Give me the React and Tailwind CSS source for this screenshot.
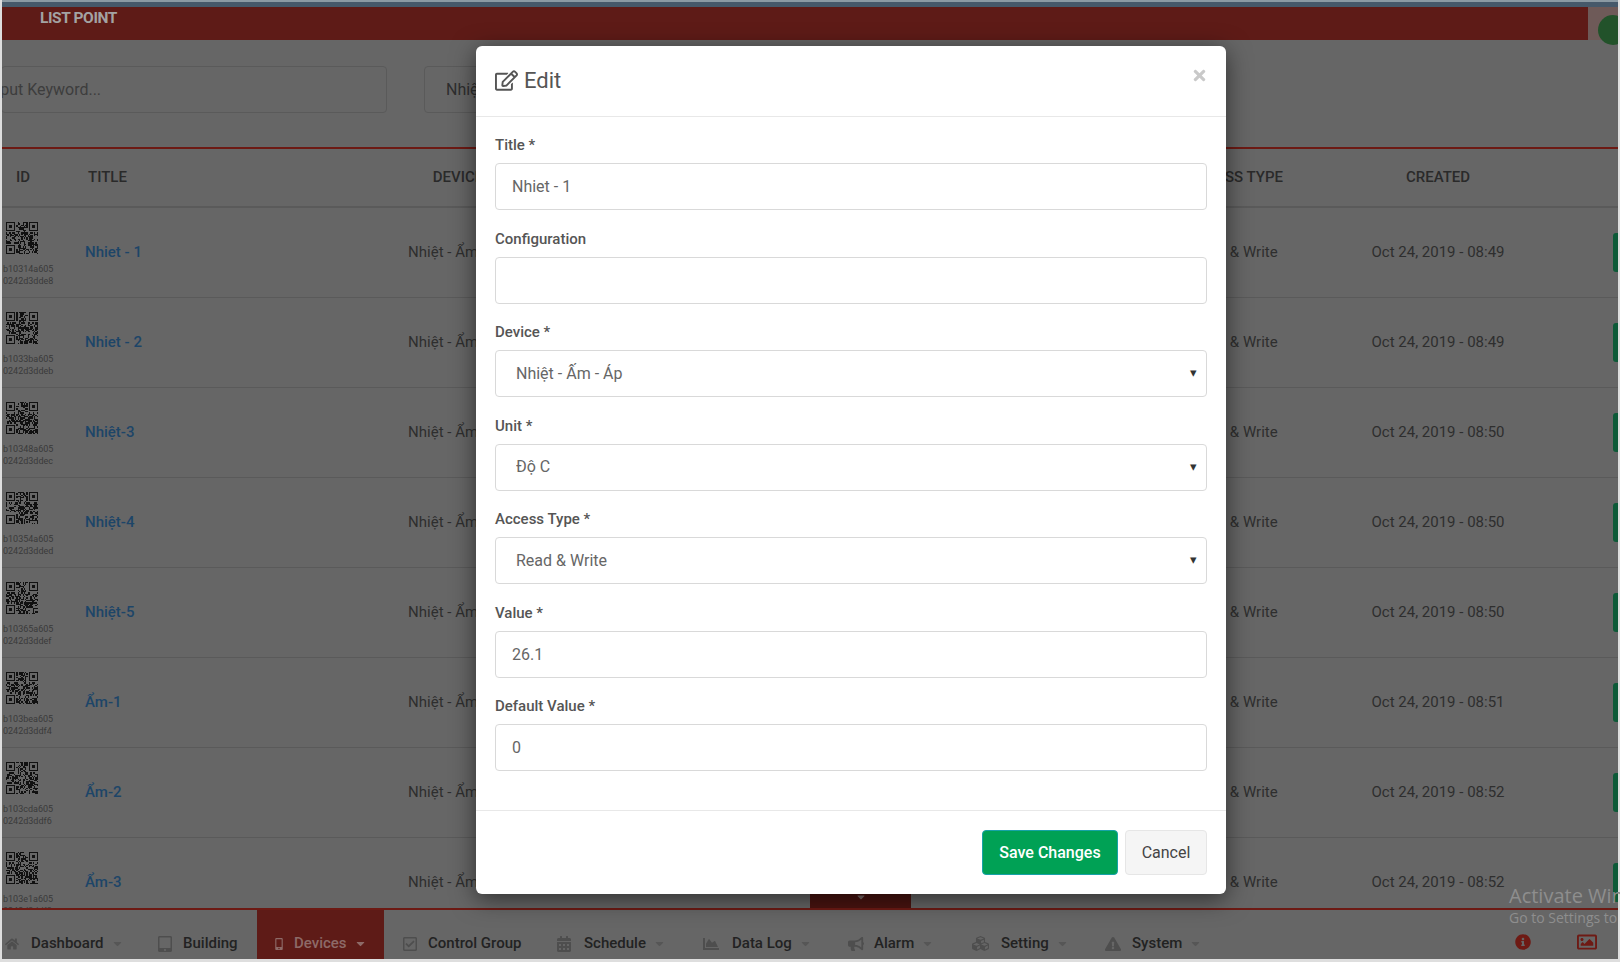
import React from 'react';
import {
  FaHome, FaTabletAlt, FaMobileAlt, FaRegCheckSquare, FaCalendarAlt, FaChartArea, FaBullhorn,
  FaCubes, FaExclamationTriangle, FaInfoCircle, FaRegImage, FaRegEdit, FaTimes, FaCaretDown,
} from 'react-icons/fa';

const rows = [
  { id: 'b10314a605', id2: '0242d3dde8', title: 'Nhiet - 1', created: 'Oct 24, 2019 - 08:49' },
  { id: 'b1033ba605', id2: '0242d3ddeb', title: 'Nhiet - 2', created: 'Oct 24, 2019 - 08:49' },
  { id: 'b10348a605', id2: '0242d3ddec', title: 'Nhiệt-3', created: 'Oct 24, 2019 - 08:50' },
  { id: 'b10354a605', id2: '0242d3dded', title: 'Nhiệt-4', created: 'Oct 24, 2019 - 08:50' },
  { id: 'b10365a605', id2: '0242d3ddef', title: 'Nhiệt-5', created: 'Oct 24, 2019 - 08:50' },
  { id: 'b103bea605', id2: '0242d3ddf4', title: 'Ẩm-1', created: 'Oct 24, 2019 - 08:51' },
  { id: 'b103cda605', id2: '0242d3ddf6', title: 'Ẩm-2', created: 'Oct 24, 2019 - 08:52' },
  { id: 'b103e1a605', id2: '0242d3ddf8', title: 'Ẩm-3', created: 'Oct 24, 2019 - 08:52' },
];

const nav = [
  { label: 'Dashboard', Icon: FaHome, caret: true, width: 'w-[137px]', pad: 'pl-[3px]', iconBox: 'w-[26px]', size: 14 },
  { label: 'Building', Icon: FaTabletAlt, width: 'w-[118px]', pad: 'pl-[18px]', iconBox: 'w-[26px]', size: 16 },
  { label: 'Devices', Icon: FaMobileAlt, caret: true, active: true, width: 'w-[127px]', pad: 'pl-[11px]', iconBox: 'w-[26px]', size: 12 },
  { label: 'Control Group', Icon: FaRegCheckSquare, width: 'w-[156px]', pad: 'pl-[18px]', iconBox: 'w-[26px]', size: 16 },
  { label: 'Schedule', Icon: FaCalendarAlt, caret: true, width: 'w-[145px]', pad: 'pl-[16px]', iconBox: 'w-[28px]', size: 16 },
  { label: 'Data Log', Icon: FaChartArea, caret: true, width: 'w-[145px]', pad: 'pl-[18px]', iconBox: 'w-[29px]', size: 16 },
  { label: 'Alarm', Icon: FaBullhorn, caret: true, width: 'w-[125px]', pad: 'pl-[18px]', iconBox: 'w-[26px]', size: 16 },
  { label: 'Setting', Icon: FaCubes, caret: true, width: 'w-[132px]', pad: 'pl-[17px]', iconBox: 'w-[29px]', size: 17 },
  { label: 'System', Icon: FaExclamationTriangle, caret: true, width: 'w-[140px]', pad: 'pl-[18px]', iconBox: 'w-[27px]', size: 16 },
];

const columns = 'grid grid-cols-[81px_230px_290px_527px_210px_196px_82px]';

// not a real code, just something that reads as one at this size
function QrCode({ seed }) {
  const size = 25;
  const cells = [];
  let s = seed * 7919 + 17;
  for (let y = 0; y < size; y++) {
    for (let x = 0; x < size; x++) {
      s = (s * 1103515245 + 12345) & 0x7fffffff;
      const inFinder = (x < 8 && y < 8) || (x > 16 && y < 8) || (x < 8 && y > 16);
      if (!inFinder && (s >> 16) % 2 === 0) cells.push(<rect key={x + '-' + y} x={x} y={y} width="1" height="1" />);
    }
  }
  const finder = (x, y) => (
    <g key={x + '_' + y}>
      <path d={`M${x} ${y}h7v7h-7z M${x + 1} ${y + 1}v5h5v-5z`} fillRule="evenodd" />
      <rect x={x + 2} y={y + 2} width="3" height="3" />
    </g>
  );
  return (
    <svg viewBox="0 0 25 25" className="w-8 h-8 fill-[#111]" shapeRendering="crispEdges">
      {cells}
      {finder(0, 0)}
      {finder(18, 0)}
      {finder(0, 18)}
    </svg>
  );
}

function Row({ row, index }) {
  return (
    <div className={`${columns} h-[90px] shrink-0 border-b border-[#5a5a5a] text-[15px] text-[#2e2e2e]`}>
      <div className="pl-[4px] pt-[14px]">
        <QrCode seed={index + 1} />
        <div className="mt-[9px] -ml-[3px] text-[9px] leading-[12px] text-[#3a3a3a] whitespace-nowrap">
          <div>{row.id}</div>
          <div>{row.id2}</div>
        </div>
      </div>
      <div className="flex items-center pl-[2px] font-medium text-[#1d4568]">{row.title}</div>
      <div className="flex items-center justify-center">Nhiệt - Ẩm - Áp</div>
      <div />
      <div className="flex items-center justify-center">Read &amp; Write</div>
      <div className="flex items-center justify-center">{row.created}</div>
      <div className="flex items-center justify-end">
        <div className="w-[5px] h-[39px] rounded-l-[3px] bg-[#0e5a38]" />
      </div>
    </div>
  );
}

function NavItem({ item }) {
  const { label, Icon, caret, active, width, pad, iconBox, size } = item;
  return (
    <div className={`${width} ${pad} h-full flex items-center pt-[18px] ${active ? 'bg-[#5e1b17] text-[#8d6a67]' : 'text-[#222]'}`}>
      <span className={`${iconBox} shrink-0 ${active ? 'text-[#8d6a67]' : 'text-[#4e4e4e]'}`}>
        <Icon size={size} className={active ? 'ml-[5px]' : ''} />
      </span>
      <span className="font-medium text-[15px]">{label}</span>
      {caret && <FaCaretDown size={13} className={`ml-[7px] ${active ? 'text-[#8d6a67]' : 'text-[#565656]'}`} />}
    </div>
  );
}

function Field({ label, value, select, optional }) {
  return (
    <div className="h-[93.5px] shrink-0">
      <label className="block h-[27px] text-[15px] leading-[18px] font-medium text-[#555]">{label}{optional ? '' : ' *'}</label>
      <div className="relative">
        {select ? (
          <>
            <select
              defaultValue={value}
              className="w-full h-[47px] pl-[20px] rounded-[4px] border border-[#d9d9d9] bg-white text-[16px] text-[#666] appearance-none outline-none"
            >
              <option>{value}</option>
            </select>
            <span className="absolute right-[10px] top-[13px] text-[13px] text-[#333]">▾</span>
          </>
        ) : (
          <input
            readOnly
            value={value}
            className="w-full h-[47px] px-[16px] rounded-[4px] border border-[#d9d9d9] bg-white text-[16px] text-[#666] outline-none"
          />
        )}
      </div>
    </div>
  );
}

function EditModal() {
  return (
    <div className="absolute left-[476px] top-[46px] w-[750px] h-[848px] flex flex-col bg-white rounded-[6px] shadow-[0_5px_25px_rgba(0,0,0,0.55)]">
      <div className="h-[71px] shrink-0 flex items-start justify-between px-[19px] pt-[20px] border-b border-[#e8e8e8]">
        <div className="flex items-center gap-[6px] text-[#555]">
          <FaRegEdit size={23} />
          <span className="text-[22px] leading-[26px] mt-[2px]">Edit</span>
        </div>
        <FaTimes size={17} className="text-[#c9c9c9] mt-[1px] -mr-[1px]" />
      </div>
      <div className="flex-1 px-[19px] pt-[19px] overflow-hidden">
        <Field label="Title" value="Nhiet - 1" />
        <Field label="Configuration" value="" optional />
        <Field label="Device" value="Nhiệt - Ấm - Áp" select />
        <Field label="Unit" value="Độ C" select />
        <Field label="Access Type" value="Read & Write" select />
        <Field label="Value" value="26.1" />
        <Field label="Default Value" value="0" />
      </div>
      <div className="h-[84px] shrink-0 flex justify-end items-start gap-[7px] px-[19px] pt-[19px] border-t border-[#e8e8e8]">
        <button className="w-[136px] h-[45px] rounded-[4px] border border-[#17a2a8] bg-[#00a155] text-white font-medium text-[16px]">Save Changes</button>
        <button className="w-[82px] h-[45px] rounded-[4px] border border-[#e6e6e6] bg-[#f5f5f5] text-[#444] text-[16px]">Cancel</button>
      </div>
    </div>
  );
}

export default function App() {
  return (
    <div className="relative w-[1620px] h-[962px] overflow-hidden bg-[#dedede] font-['Roboto',sans-serif]">
      <div className="absolute inset-y-0 left-[2px] right-[2px] bottom-[3px] flex flex-col bg-[#666] overflow-hidden">
        <div className="h-[2px] shrink-0 bg-[#8b9aa3]" />
        <div className="h-[5px] shrink-0 bg-[#46596a]" />
        <div className="h-[33px] shrink-0 flex bg-[#5e1b17]">
          <div className="flex-1 pl-[38px] pt-[1px] text-[15.5px] leading-[20px] font-bold tracking-[-0.4px] text-[#a3a3a3]">LIST POINT</div>
          <div className="w-[30px] bg-[#6e5a58]" />
        </div>

        <div className="h-[109px] shrink-0 flex items-start gap-[37px] pt-[26px] border-b-2 border-[#6d1a14] overflow-hidden">
          <div className="w-[386px] h-[47px] shrink-0 flex items-center -ml-[1px] pl-[1px] rounded-[4px] border border-[#5a5a5a] overflow-hidden">
            <span className="-ml-[16px] text-[16px] text-[#3d3d3d] whitespace-nowrap">Input Keyword...</span>
          </div>
          <div className="w-[400px] h-[47px] shrink-0 flex items-center pl-[21px] rounded-[4px] border border-[#5a5a5a] text-[16px] text-[#2e2e2e]">Nhiệt - Ẩm - Áp</div>
        </div>

        <div className={`${columns} h-[59px] shrink-0 items-center border-b-2 border-[#5a5a5a] text-[15px] font-medium text-[#2a2a2a]`}>
          <div className="pl-[14px]">ID</div>
          <div className="pl-[5px]">TITLE</div>
          <div className="text-center">DEVICE</div>
          <div />
          <div className="text-center">ACCESS TYPE</div>
          <div className="text-center">CREATED</div>
          <div />
        </div>

        <div className="flex-1 min-h-0 overflow-hidden flex flex-col">
          {rows.map((row, i) => <Row key={row.id} row={row} index={i} />)}
        </div>

        <div className="h-[51px] shrink-0 flex border-t-2 border-[#6d1a14]">
          {nav.map(item => <NavItem key={item.label} item={item} />)}
          <div className="flex-1 flex items-center justify-end gap-[46px] pr-[21px] pt-[14px] text-[#6e1a14]">
            <FaInfoCircle size={16} />
            <FaRegImage size={20} />
          </div>
        </div>
      </div>

      {/* green status dot stuck to the top right */}
      <div className="absolute left-[1598px] top-[15px] w-[30px] h-[30px] rounded-full bg-[#22522a]" />
      <div className="absolute right-0 top-0 bottom-0 w-[2px] bg-[#dedede]" />

      {/* pagination tab that peeks out under the modal */}
      <div className="absolute left-[810px] top-[893px] w-[101px] h-[15px] flex justify-center bg-[#4a1410]">
        <FaCaretDown size={12} className="text-[#7c6a68] -mt-[2px]" />
      </div>

      <div className="absolute left-[1509px] top-[882px] whitespace-nowrap text-[#8e8e8e] font-['Open_Sans',sans-serif]">
        <div className="text-[20px] leading-[27px]">Activate Windows</div>
        <div className="text-[14px] leading-[18px]">Go to Settings to activate Windows.</div>
      </div>

      <EditModal />
    </div>
  );
}
